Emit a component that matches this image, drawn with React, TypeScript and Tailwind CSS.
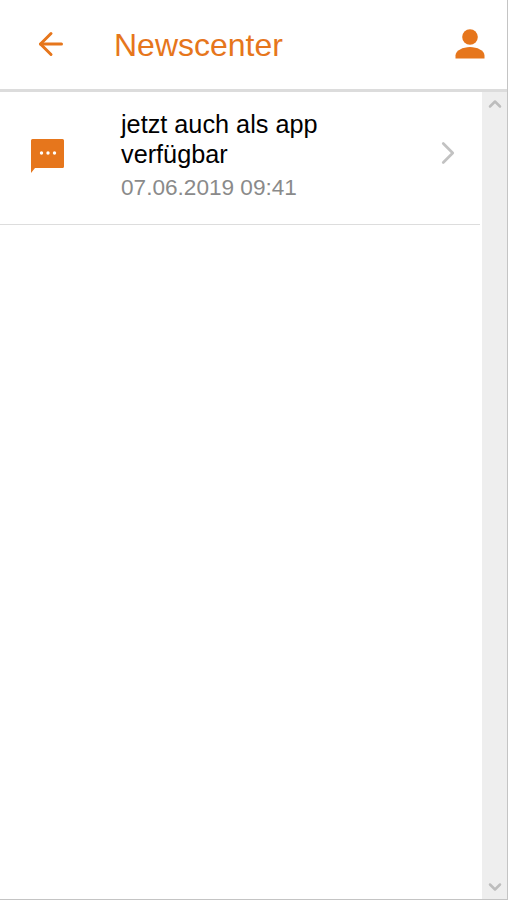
import { ArrowLeft, ChevronRight, ChevronUp, ChevronDown } from 'lucide-react';

export default function App() {
  return (
    <div className="flex h-[900px] w-[508px] flex-col overflow-hidden border-r border-b border-[#c4c4c4] bg-white font-['Liberation_Sans',Arial,sans-serif]">
      <header className="z-10 flex h-[92px] shrink-0 items-center border-b-[3px] border-[#dcdcdc] bg-white pb-[2px] pl-[33px] pr-[22px]">
        <ArrowLeft size={36} strokeWidth={2} className="text-[#e6761c]" />
        <h1 className="ml-[45px] mt-[3px] flex-1 text-[32px] leading-none text-[#e6761c]">Newscenter</h1>
        <svg width="30" height="30" viewBox="0 0 30 30" className="text-[#e6761c]" fill="currentColor">
          <circle cx="15" cy="8" r="7.8" />
          <path d="M.5 29.5v-3C.5 21.5 8 18 15 18s14.5 3.5 14.5 8.5v3z" />
        </svg>
      </header>
      <div className="flex min-h-0 flex-1">
        <main className="mr-[2px] min-w-0 flex-1">
          <div className="flex h-[133px] items-start border-b border-[#dddddd] pl-[29px] pr-[13px]">
            <svg width="38" height="38" viewBox="0 0 38 38" className="mt-[46px] shrink-0 text-[#e6761c]">
              <path
                d="M3.5 1h30a1.5 1.5 0 0 1 1.5 1.5v26a1.5 1.5 0 0 1-1.5 1.5H6l-4 5V2.5A1.5 1.5 0 0 1 3.5 1z"
                fill="currentColor"
              />
              <circle cx="12.5" cy="15" r="1.7" fill="#fff" />
              <circle cx="19" cy="15" r="1.7" fill="#fff" />
              <circle cx="25.5" cy="15" r="1.7" fill="#fff" />
            </svg>
            <div className="ml-[54px] min-w-0 flex-1 pt-[17px]">
              <p className="text-[25.25px] leading-[30px] text-black">jetzt auch als app<br />verfügbar</p>
              <p className="mt-[6px] text-[22.6px] leading-[26px] text-[#8a8a8a]">07.06.2019 09:41</p>
            </div>
            <ChevronRight size={38} strokeWidth={1.7} className="mt-[42px] shrink-0 text-[#c2c2c2]" />
          </div>
        </main>
        <aside className="flex w-[25px] shrink-0 flex-col items-center justify-between bg-[#eeeeee] py-[2px]">
          <ChevronUp size={20} strokeWidth={3} className="text-[#bdbdbd]" />
          <ChevronDown size={20} strokeWidth={3} className="text-[#bdbdbd]" />
        </aside>
      </div>
    </div>
  );
}
